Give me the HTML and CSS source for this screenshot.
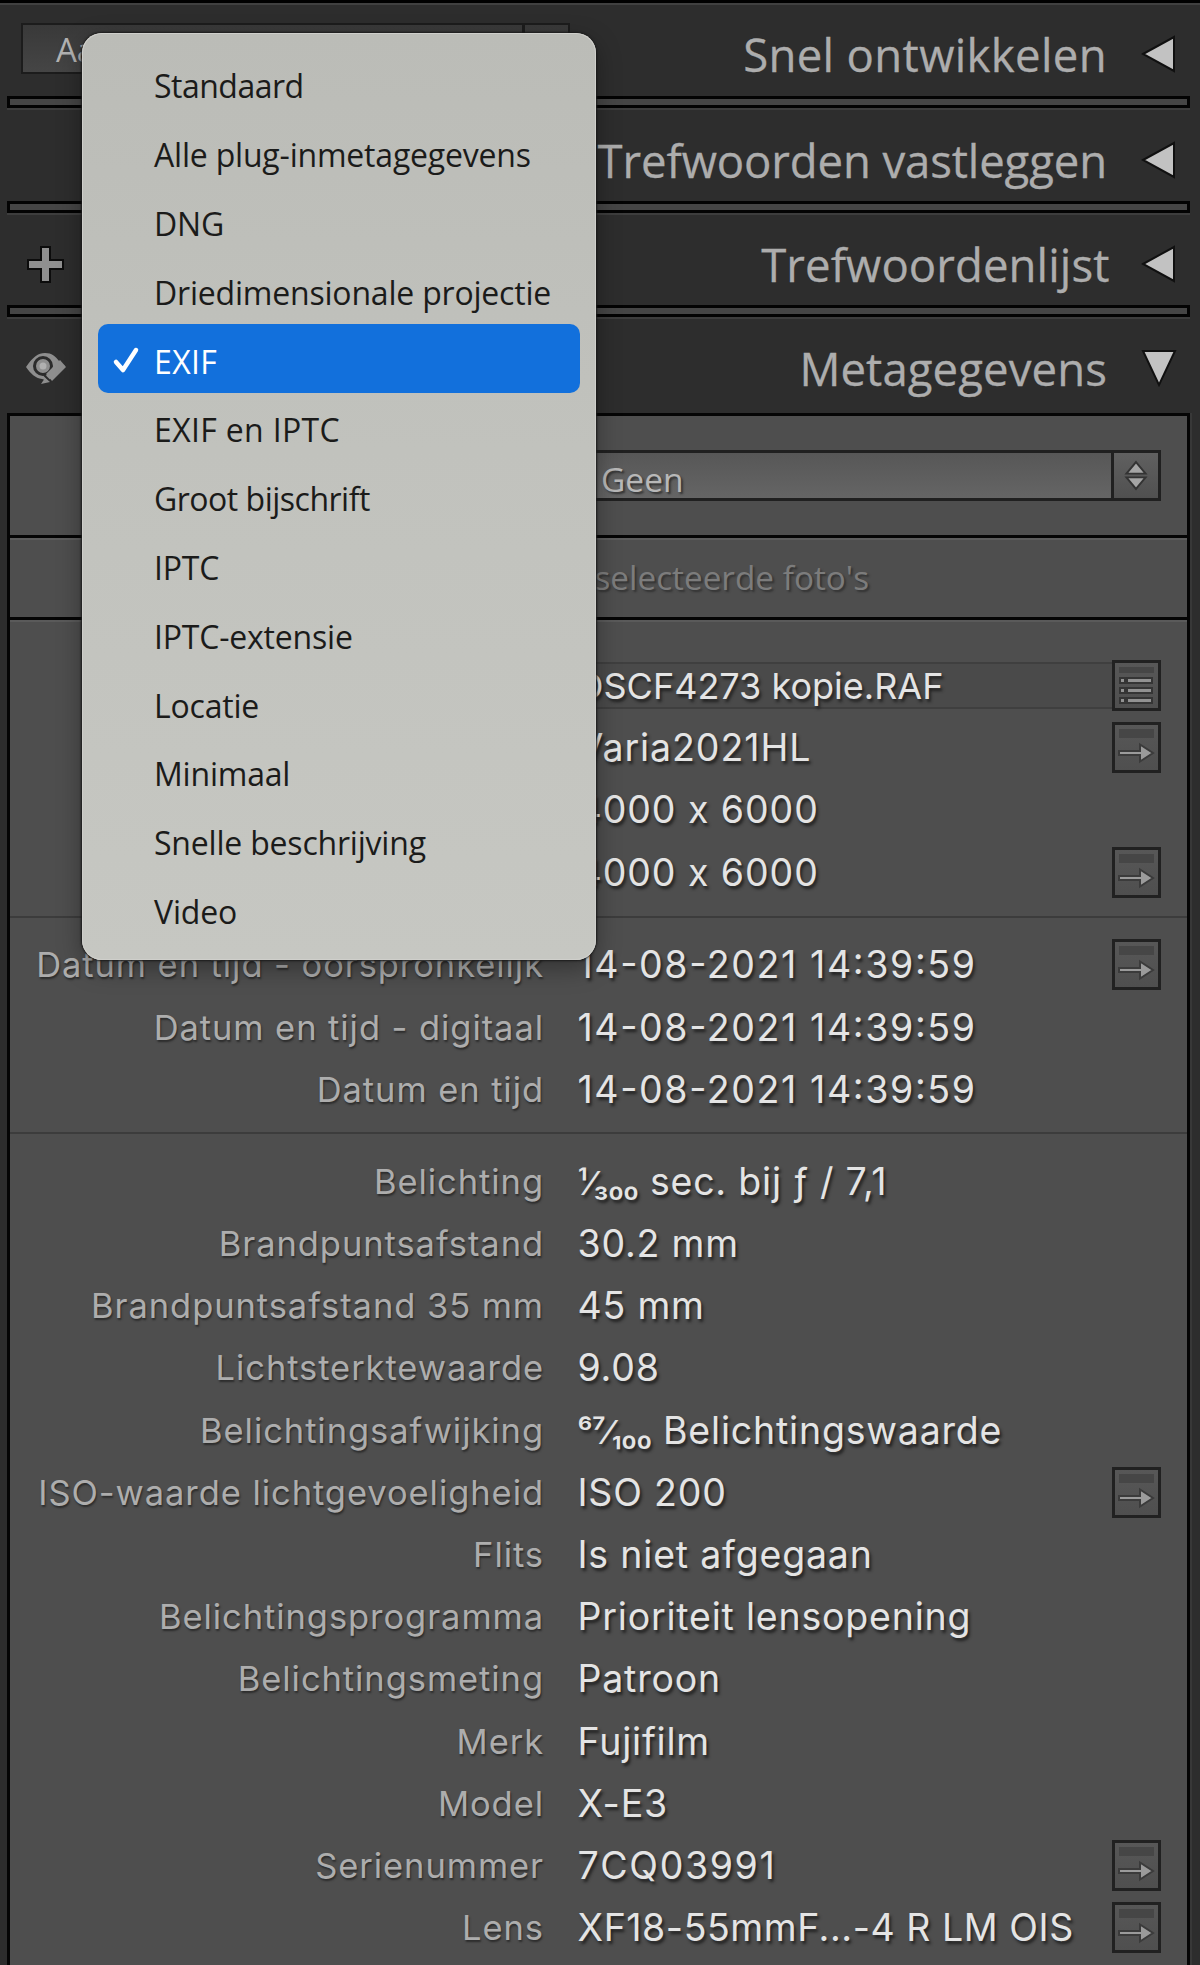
FILE: index.html
```html
<!DOCTYPE html>
<html lang="nl">
<head>
<meta charset="utf-8">
<title>Metagegevens</title>
<link rel="stylesheet" href="styles.css">
</head>
<body>
<svg class="defs" width="0" height="0">
  <symbol id="go" viewBox="3 3 43 45">
    <rect x="7" y="7" width="35" height="9" fill="#464646"/>
    <path d="M7 29h21v-6.500l13 8.500-13 8.500v-6.500h-21z" fill="#9b9b9b" stroke="#3b3b3b" stroke-width="2"/>
  </symbol>
  <symbol id="list" viewBox="3 3 43 45">
    <rect x="7" y="7" width="35" height="6" fill="#464646"/>
    <g fill="#929292" stroke="#353535" stroke-width="2">
      <rect x="15" y="18" width="25" height="5"/><rect x="15" y="28" width="25" height="5"/><rect x="15" y="38" width="25" height="5"/>
      <rect x="8" y="18" width="5" height="5"/><rect x="8" y="28" width="5" height="5"/><rect x="8" y="38" width="5" height="5"/>
    </g>
  </symbol>
  <symbol id="collapsed" viewBox="0 0 36 40">
    <path d="M2 20L33 3V37Z" fill="#c2c2c2" stroke="#101010" stroke-width="2"/>
  </symbol>
  <symbol id="expanded" viewBox="0 0 36 40">
    <path d="M2 3H34L18 37Z" fill="#c2c2c2" stroke="#101010" stroke-width="2"/>
  </symbol>
</svg>

<main class="column">
  <header class="head head-first">
    <div class="preset"><span>Aangepast</span><i></i></div>
    <h2>Snel ontwikkelen</h2><svg class="tri"><use href="#collapsed"/></svg>
  </header>
  <div class="bar"></div>
  <header class="head head-add">
    <h2>Trefwoorden vastleggen</h2><svg class="tri"><use href="#collapsed"/></svg>
  </header>
  <div class="bar"></div>
  <header class="head head-list">
    <svg class="tool" viewBox="0 0 42 42"><path d="M17 4h9v13h13v9H26v13h-9V26H4v-9h13z" fill="#909090" stroke="#0c0c0c" stroke-width="2"/></svg>
    <h2>Trefwoordenlijst</h2><svg class="tri"><use href="#collapsed"/></svg>
  </header>
  <div class="bar"></div>
  <header class="head head-open">
    <svg class="tool" viewBox="0 0 42 42">
      <path d="M2 20C9 10 14 6 21 6s10 3 15 9l5 4-17 15-6-2C11 31 7 27 2 20z" fill="#8e8e8e"/>
      <circle cx="19" cy="19" r="8.500" fill="#8e8e8e" stroke="#2b2b2b" stroke-width="3"/>
      <circle cx="19" cy="19" r="3.500" fill="#b0b0b0"/>
      <path d="M36 13L22 27l6 7 14-14z" fill="#8e8e8e"/>
      <path d="M20 28l7 7" stroke="#2b2b2b" stroke-width="2"/>
      <path d="M17 37l4-6 5 4z" fill="#8e8e8e"/>
    </svg>
    <h2>Metagegevens</h2><svg class="tri"><use href="#expanded"/></svg>
  </header>

  <section class="panel">
    <div class="band band-preset">
      <div class="select"><span>Geen</span>
        <svg viewBox="0 0 46 46"><g fill="#a5a5a5" stroke="#333" stroke-width="2"><path d="M23 9l10 12H13z"/><path d="M23 37l10-12H13z"/></g></svg>
      </div>
    </div>
    <div class="band band-target"><span>geselecteerde foto's</span></div>

    <div class="group group-file">
      <div class="row"><span></span><b class="field">DSCF4273 kopie.RAF</b><svg class="btn"><use href="#list"/></svg></div>
      <div class="row"><span></span><b class="size">Varia2021HL</b><svg class="btn"><use href="#go"/></svg></div>
      <div class="row"><span></span><b class="size">4000 x 6000</b></div>
      <div class="row"><span></span><b class="size">4000 x 6000</b><svg class="btn"><use href="#go"/></svg></div>
    </div>
    <div class="group group-date">
      <div class="row"><span>Datum en tijd - oorspronkelijk</span><b class="num">14-08-2021 14:39:59</b><svg class="btn"><use href="#go"/></svg></div>
      <div class="row"><span>Datum en tijd - digitaal</span><b class="num">14-08-2021 14:39:59</b></div>
      <div class="row"><span>Datum en tijd</span><b class="num">14-08-2021 14:39:59</b></div>
    </div>
    <div class="group group-exif">
      <div class="row"><span>Belichting</span><b><em>¹⁄₃₀₀</em> sec. bij ƒ / 7,1</b></div>
      <div class="row"><span>Brandpuntsafstand</span><b>30.2 mm</b></div>
      <div class="row"><span>Brandpuntsafstand 35 mm</span><b>45 mm</b></div>
      <div class="row"><span>Lichtsterktewaarde</span><b>9.08</b></div>
      <div class="row"><span>Belichtingsafwijking</span><b><em>⁶⁷⁄₁₀₀</em> Belichtingswaarde</b></div>
      <div class="row"><span>ISO-waarde lichtgevoeligheid</span><b>ISO 200</b><svg class="btn"><use href="#go"/></svg></div>
      <div class="row"><span>Flits</span><b>Is niet afgegaan</b></div>
      <div class="row"><span>Belichtingsprogramma</span><b>Prioriteit lensopening</b></div>
      <div class="row"><span>Belichtingsmeting</span><b>Patroon</b></div>
      <div class="row"><span>Merk</span><b>Fujifilm</b></div>
      <div class="row"><span>Model</span><b>X-E3</b></div>
      <div class="row"><span>Serienummer</span><b class="num">7CQ03991</b><svg class="btn"><use href="#go"/></svg></div>
      <div class="row"><span>Lens</span><b class="lens">XF18-55mmF...-4 R LM OIS</b><svg class="btn"><use href="#go"/></svg></div>
    </div>
  </section>
</main>

<ul class="menu">
  <li class="tight">Standaard</li>
  <li>Alle plug-inmetagegevens</li>
  <li>DNG</li>
  <li>Driedimensionale projectie</li>
  <li class="caps active"><svg viewBox="0 0 28 32"><path d="M4 18l7 8L24 6" fill="none" stroke="#fff" stroke-width="4.500" stroke-linecap="round" stroke-linejoin="round"/></svg>EXIF</li>
  <li class="caps">EXIF en IPTC</li>
  <li class="tight">Groot bijschrift</li>
  <li>IPTC</li>
  <li>IPTC-extensie</li>
  <li>Locatie</li>
  <li>Minimaal</li>
  <li>Snelle beschrijving</li>
  <li>Video</li>
</ul>
</body>
</html>
```
FILE: styles.css
```css
* { box-sizing: border-box; }
body {
  margin: 0;
  width: 1200px;
  height: 1965px;
  overflow: hidden;
  position: relative;
  background: #2d2d2d;
  font-family: "Open Sans", "Noto Sans", sans-serif;
}
.defs { position: absolute; }

.column {
  height: 1965px;
  padding: 0 10px 0 7px;
  border-top: 3px solid #000;
  display: flex;
  flex-direction: column;
  box-shadow: inset 0 2px 0 #404040;
}

.head {
  flex: none;
  height: 92.500px;
  padding: 11px 13px 0 17px;
  display: flex;
  align-items: center;
}
.head-first { height: 93px; padding: 9px 13px 0 14px; }
.head-open { height: 96px; padding-top: 6px; }
.head h2 {
  margin: 0 34px 0 auto;
  font-size: 45.500px;
  font-weight: 400;
  letter-spacing: 0.100px;
  line-height: 60px;
  color: #adadad;
  white-space: nowrap;
  -webkit-text-stroke: 0.300px #adadad;
}
.head-first h2 { letter-spacing: 0.350px; }
.head-add h2 { letter-spacing: -0.120px; }
.head-list h2 { margin-right: 31.500px; }
.tri { width: 36px; height: 40px; }
.tool { width: 42px; height: 42px; }
.bar {
  flex: none;
  height: 12px;
  border: 3px solid #030303;
  background: #454545;
  box-shadow: 0 2px 0 #3d3d3d;
}

.preset {
  width: 549px;
  height: 51px;
  margin-top: -11px;
  border: 2px solid #1c1c1c;
  background: linear-gradient(#393939, #454545);
  color: #b2b2b2;
  font-size: 33px;
  line-height: 50px;
  padding-left: 33px;
  display: flex;
  justify-content: space-between;
}
.preset i { width: 46px; border-left: 3px solid #1c1c1c; }

.panel {
  flex: 1;
  min-height: 0;
  border: solid #050505;
  border-width: 3px 3px 0;
  background: #4e4e4e;
  box-shadow: 2px 0 0 #383838;
}
.band { border-bottom: 3px solid #050505; }
.band-preset { height: 122px; padding: 34px 26px 0 240px; }
.band-target {
  height: 82px;
  border-top: 2px solid #5c5c5c;
  text-align: right;
  padding: 15px 318px 0 0;
  font-size: 33.300px;
  line-height: 45px;
  color: #7c7c7c;
  text-shadow: 2px 2px 2px #333;
}
.select {
  height: 51px;
  border: 3px solid #202020;
  background: linear-gradient(#575757, #656565);
  display: flex;
  justify-content: space-between;
  align-items: center;
  font-size: 33.500px;
  color: #b8b8b8;
  text-shadow: 2px 2px 2px #333;
  padding-left: 348px;
}
.select span { padding-top: 6px; }
.select svg {
  width: 47px;
  height: 45px;
  border-left: 3px solid #202020;
  background: linear-gradient(#606060, #505050);
}

.group { font-family: Inter, "Noto Sans", sans-serif; }
.group-file { padding: 32.500px 0 12.500px; border-top: 2px solid #5a5a5a; }
.group-date { padding: 16px 0 12px; border-top: 2px solid #3c3c3c; }
.group-exif { padding-top: 16px; border-top: 2px solid #3c3c3c; }
.row {
  height: 62.200px;
  display: grid;
  grid-template-columns: 534px 1fr 48px;
  align-items: center;
  padding-right: 27px;
  white-space: nowrap;
}
.row span {
  text-align: right;
  font-size: 34.500px;
  letter-spacing: 0.930px;
  color: #adadad;
  text-shadow: 1px 2px 2px #2b2b2b;
}
.row b {
  padding-left: 33.500px;
  font-weight: 400;
  font-size: 37.500px;
  letter-spacing: 0.800px;
  color: #e4e4e4;
  text-shadow: 2px 3px 3px #222;
}
.row em {
  font-style: normal;
  font-weight: 500;
  font-size: 33px;
  letter-spacing: -0.400px;
}
.row .num { letter-spacing: 1.620px; font-feature-settings: "case"; }
.row .size { letter-spacing: 0.930px; }
.row .lens { letter-spacing: 0.550px; }
.row .field {
  height: 47px;
  font-size: 36px;
  line-height: 44px;
  letter-spacing: 0;
  border: solid #3f3f3f;
  border-width: 2px 0;
  background: #4a4a4a;
}
.btn {
  width: 49px;
  height: 51px;
  border: 3px solid #212121;
  background: linear-gradient(#575757, #4f4f4f);
}

.menu {
  position: absolute;
  left: 82px;
  top: 33px;
  width: 514px;
  height: 927px;
  margin: 0;
  padding: 16px 16px;
  list-style: none;
  border-radius: 20px;
  background: linear-gradient(#bbbcb7, #c1c2bd 45%, #c6c7c2);
  box-shadow: 0 0 2px 1px #1a1a1a, 0 8px 24px rgba(0, 0, 0, 0.35), inset 0 0 0 1px #cfcfcb;
  font-size: 32px;
  color: #1b1b1a;
}
.menu li {
  height: 68.800px;
  padding: 5px 0 0 56px;
  display: flex;
  align-items: center;
  letter-spacing: -0.200px;
  white-space: nowrap;
  border-radius: 10px;
}
.menu .tight { letter-spacing: -0.500px; }
.menu .caps { letter-spacing: 0.350px; }
.menu .active { background: #1270dc; color: #fff; }
.menu .active svg { width: 28px; height: 32px; margin: 0 14px 2px -42px; }
```
